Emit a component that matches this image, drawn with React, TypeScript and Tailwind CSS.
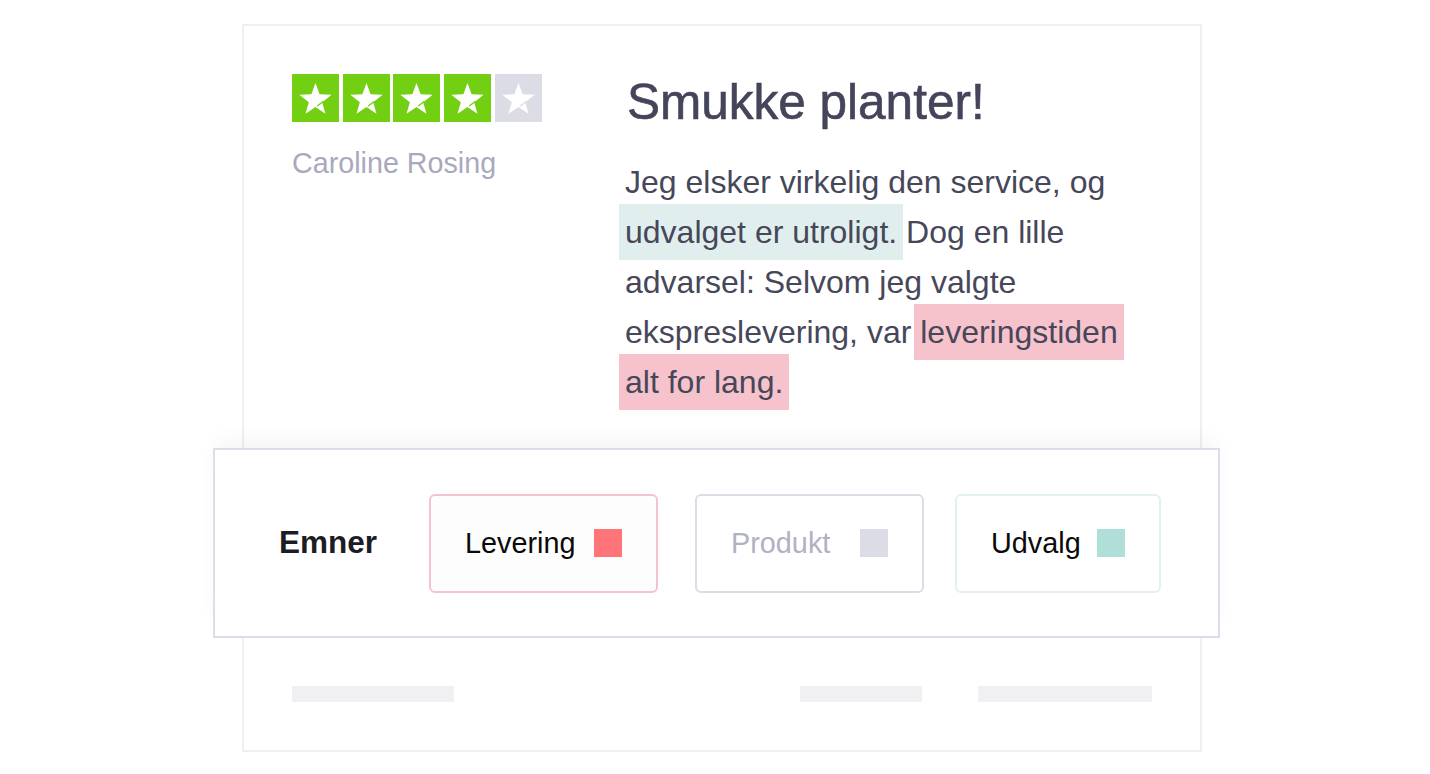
const GREEN = "#73cf11";
const GREY = "#dcdce6";

function Star({ filled }: { filled: boolean }) {
  const bg = filled ? GREEN : GREY;
  return (
    <svg width="47" height="48" viewBox="0 0 47 48" className="block">
      <rect width="47" height="48" fill={bg} />
      <polygon
        fill="#ffffff"
        points="23.5,9 27.62,20.34 39.67,20.75 30.16,28.16 33.5,39.75 23.5,33 13.5,39.75 16.84,28.16 7.33,20.75 19.38,20.34"
      />
      <path d="M31.2 27.4 L25.2 32" stroke={bg} strokeWidth="1.3" />
    </svg>
  );
}

function Topic({
  label,
  width,
  border,
  text,
  swatch,
  bg,
}: {
  label: string;
  width: string;
  border: string;
  text: string;
  swatch: string;
  bg: string;
}) {
  return (
    <div
      className={`${width} ${border} ${bg} h-[99px] shrink-0 border-2 rounded-[6px] flex items-center justify-between px-[34px]`}
    >
      <span className={`${text} text-[28.8px] leading-none`}>{label}</span>
      <span className={`${swatch} w-[28px] h-[28px]`} />
    </div>
  );
}

export default function App() {
  return (
    <div className="min-h-screen bg-white pt-[24px] pl-[242px] font-['Liberation_Sans',Arial,sans-serif]">
      <div className="w-[960px] h-[728px] border-2 border-[#f0f0f2] flex flex-col">
        <div className="h-[422px] flex pt-[48px] pl-[48px]">
          <div className="w-[333px] shrink-0">
            <div className="flex gap-[3.7px]">
              <Star filled />
              <Star filled />
              <Star filled />
              <Star filled />
              <Star filled={false} />
            </div>
            <div className="mt-[24px] text-[28.7px] leading-[34px] text-[#a9a9bd]">
              Caroline Rosing
            </div>
          </div>
          <div className="pt-[4px]">
            <h1 className="ml-[2px] text-[49.5px] leading-[48px] text-[#44445a] [-webkit-text-stroke:0.6px_#44445a]">
              Smukke planter!
            </h1>
            <p className="mt-[31px] text-[32px] leading-[50px] text-[#474759] w-[540px]">
              Jeg elsker virkelig den service, og
              <br />
              <span className="bg-[#e0efee] py-[10px] px-[6px] -mx-[6px] box-decoration-clone">
                udvalget er utroligt.
              </span>{" "}
              Dog en lille
              <br />
              advarsel: Selvom jeg valgte
              <br />
              ekspreslevering, var{" "}
              <span className="bg-[#f6c2cb] py-[10px] px-[6px] -mx-[6px] box-decoration-clone">
                leveringstiden
                <br />
                alt for lang.
              </span>
            </p>
          </div>
        </div>

        <div className="relative z-10 -ml-[31px] -mr-[20px] h-[190px] border-2 border-[#dddce8] bg-white shadow-[0_-12px_22px_-6px_rgba(0,0,0,0.05)] flex items-center pl-[64px]">
          <span className="text-[31.5px] font-bold text-[#1c1c24] leading-none">Emner</span>
          <div className="flex items-center ml-[52px]">
            <Topic
              label="Levering"
              width="w-[229px]"
              border="border-[#f6c3cc]"
              text="text-[#0a0a0a]"
              swatch="bg-[#ff7479]"
              bg="bg-[#fdfdfe]"
            />
            <div className="w-[37px]" />
            <Topic
              label="Produkt"
              width="w-[229px]"
              border="border-[#dcdbe6]"
              text="text-[#b1b0c5]"
              swatch="bg-[#dcdce6]"
              bg="bg-white"
            />
            <div className="w-[31px]" />
            <Topic
              label="Udvalg"
              width="w-[206px]"
              border="border-[#e2f1ef]"
              text="text-[#0a0a0a]"
              swatch="bg-[#b0ded8]"
              bg="bg-white"
            />
          </div>
        </div>

        <div className="flex pt-[48px] px-[48px]">
          <div className="w-[162px] h-[16px] bg-[#f0f0f2]" />
          <div className="ml-auto w-[122px] h-[16px] bg-[#f0f0f2]" />
          <div className="ml-[56px] w-[174px] h-[16px] bg-[#f0f0f2]" />
        </div>
      </div>
    </div>
  );
}
